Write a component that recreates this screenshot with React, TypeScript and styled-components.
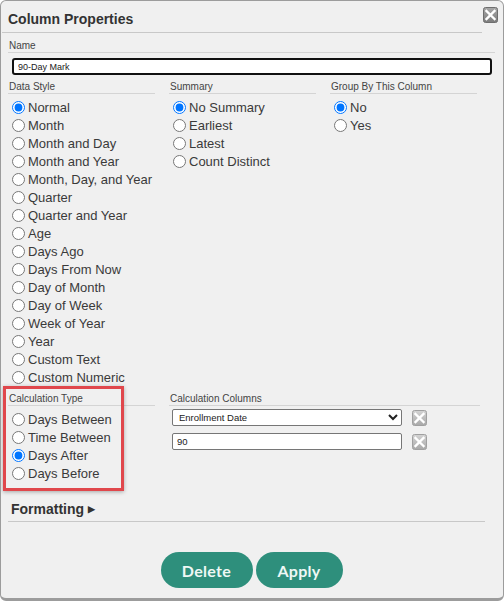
import React from 'react';
import styled, { createGlobalStyle } from 'styled-components';

const GlobalStyle = createGlobalStyle`
  html, body {
    margin: 0;
    padding: 0;
    background: #ffffff;
  }
  * {
    box-sizing: border-box;
  }
`;

const Dialog = styled.div`
  width: 504px;
  height: 601px;
  display: flex;
  flex-direction: column;
  background: #f0f0f0;
  border: 1px solid #9c9c9c;
  border-bottom-width: 3px;
  border-radius: 6px;
  font-family: "Liberation Sans", Arial, sans-serif;
  color: #333;
  overflow: hidden;
`;

const Header = styled.div`
  display: flex;
  align-items: flex-start;
  padding: 6px 5px 0 1px;
`;

const Title = styled.div`
  flex: 1;
  padding: 4px 0 4px 6px;
  border-bottom: 1px solid #c8c8c8;
  font-size: 14px;
  font-weight: bold;
  color: #333;
  line-height: 17px;
`;

const IconButton = styled.button<{ $dark?: boolean }>`
  display: flex;
  padding: 0;
  margin: 0 0 0 ${p => (p.$dark ? '1px' : '5px')};
  border: none;
  background: none;
  cursor: pointer;
`;

const Body = styled.div`
  display: flex;
  flex-direction: column;
  padding: 7px 8px 0 7px;
  flex: 1;
`;

const SectionLabel = styled.div`
  font-size: 10px;
  line-height: 12px;
  color: #444;
  padding-left: 1px;
  border-bottom: 1px solid #d4d4d4;
`;

const NameInput = styled.input`
  margin: 5px 3px 0 4px;
  height: 17px;
  padding: 0 4px;
  border: 2px solid #111;
  border-radius: 3px;
  background: #fff;
  font-family: "Liberation Sans", Arial, sans-serif;
  font-size: 9px;
  color: #222;
  outline: none;
`;

const ColumnsRow = styled.div<{ $top: number }>`
  display: flex;
  gap: 14px;
  margin-top: ${p => p.$top}px;
`;

const Column = styled.div<{ $width?: number }>`
  position: relative;
  display: flex;
  flex-direction: column;
  width: ${p => (p.$width ? `${p.$width}px` : '147px')};
`;

const RadioList = styled.div`
  display: flex;
  flex-direction: column;
  margin-top: 4px;
`;

const RadioLabel = styled.label`
  display: flex;
  align-items: center;
  height: 18px;
  font-size: 13px;
  color: #3a3a3a;
  white-space: nowrap;
  cursor: pointer;

  input {
    width: 13px;
    height: 13px;
    margin: 0 3px 0 4px;
  }
`;

const Highlight = styled.div`
  position: absolute;
  left: -5px;
  top: -7px;
  width: 121px;
  height: 105px;
  border: 3px solid #e0474c;
  box-shadow: 0 1px 4px rgba(0, 0, 0, 0.3);
  pointer-events: none;
`;

const FieldRow = styled.div<{ $top: number }>`
  display: flex;
  align-items: center;
  gap: 5px;
  margin: ${p => p.$top}px 0 0 3px;
`;

const SelectBox = styled.select`
  width: 230px;
  height: 17px;
  padding: 0 2px;
  border: 1px solid #767676;
  border-radius: 2px;
  background: #fff;
  font-family: "Liberation Sans", Arial, sans-serif;
  font-size: 9.5px;
  color: #222;
`;

const TextBox = styled.input`
  width: 230px;
  height: 17px;
  padding: 0 4px;
  border: 1px solid #767676;
  border-radius: 2px;
  background: #fff;
  font-family: "Liberation Sans", Arial, sans-serif;
  font-size: 9.5px;
  color: #222;
`;

const Formatting = styled.div`
  display: flex;
  align-items: center;
  gap: 4px;
  margin: 18px 10px 0 0;
  padding: 0 0 3px 3px;
  border-bottom: 1px solid #c8c8c8;
  font-size: 14px;
  font-weight: bold;
  line-height: 18px;
  color: #333;
`;

const Caret = styled.span`
  font-size: 9px;
  color: #333;
`;

const Footer = styled.div`
  display: flex;
  justify-content: center;
  gap: 3px;
  margin-top: 30px;
`;

const Button = styled.button<{ $width: number }>`
  width: ${p => p.$width}px;
  height: 36px;
  border: none;
  border-radius: 18px;
  background: #2e8f7c;
  color: #eef8f5;
  font-family: Lato, "Open Sans", sans-serif;
  font-size: 16px;
  font-weight: 700;
  letter-spacing: 0.3px;
  cursor: pointer;
`;

const CloseIcon = ({ dark }: { dark?: boolean }) => (
  <svg width={15} height={16} viewBox="0 0 15 16">
    <defs>
      <linearGradient id={dark ? 'gd' : 'gl'} x1="0" y1="0" x2="0" y2="1">
        <stop offset="0" stopColor={dark ? '#a8a8a8' : '#d4d4d4'} />
        <stop offset="1" stopColor={dark ? '#7c7c7c' : '#a8a8a8'} />
      </linearGradient>
    </defs>
    <rect x="0.5" y="0.5" width="14" height="15" rx="2" fill={`url(#${dark ? 'gd' : 'gl'})`} stroke={dark ? '#6e6e6e' : '#a0a0a0'} />
    <path d="M3.5 4 L11.5 12 M11.5 4 L3.5 12" stroke="#fff" strokeWidth="2.4" strokeLinecap="square" />
  </svg>
);

const dataStyles = [
  'Normal',
  'Month',
  'Month and Day',
  'Month and Year',
  'Month, Day, and Year',
  'Quarter',
  'Quarter and Year',
  'Age',
  'Days Ago',
  'Days From Now',
  'Day of Month',
  'Day of Week',
  'Week of Year',
  'Year',
  'Custom Text',
  'Custom Numeric',
];

const summaries = ['No Summary', 'Earliest', 'Latest', 'Count Distinct'];
const groupings = ['No', 'Yes'];
const calcTypes = ['Days Between', 'Time Between', 'Days After', 'Days Before'];

type RadioGroupProps = {
  name: string;
  items: string[];
  selected: string;
};

const RadioGroup = ({ name, items, selected }: RadioGroupProps) => (
  <RadioList>
    {items.map(item => (
      <RadioLabel key={item}>
        <input type="radio" name={name} defaultChecked={item === selected} />
        {item}
      </RadioLabel>
    ))}
  </RadioList>
);

const App = () => (
  <>
    <GlobalStyle />
    <Dialog>
      <Header>
        <Title>Column Properties</Title>
        <IconButton $dark>
          <CloseIcon dark />
        </IconButton>
      </Header>
      <Body>
        <SectionLabel>Name</SectionLabel>
        <NameInput defaultValue="90-Day Mark" />

        <ColumnsRow $top={6}>
          <Column>
            <SectionLabel>Data Style</SectionLabel>
            <RadioGroup name="dataStyle" items={dataStyles} selected="Normal" />
          </Column>
          <Column>
            <SectionLabel>Summary</SectionLabel>
            <RadioGroup name="summary" items={summaries} selected="No Summary" />
          </Column>
          <Column>
            <SectionLabel>Group By This Column</SectionLabel>
            <RadioGroup name="group" items={groupings} selected="No" />
          </Column>
        </ColumnsRow>

        <ColumnsRow $top={7}>
          <Column>
            <SectionLabel>Calculation Type</SectionLabel>
            <RadioGroup name="calcType" items={calcTypes} selected="Days After" />
            <Highlight />
          </Column>
          <Column $width={311}>
            <SectionLabel>Calculation Columns</SectionLabel>
            <FieldRow $top={3}>
              <SelectBox defaultValue="Enrollment Date">
                <option>Enrollment Date</option>
              </SelectBox>
              <IconButton>
                <CloseIcon />
              </IconButton>
            </FieldRow>
            <FieldRow $top={7}>
              <TextBox defaultValue="90" />
              <IconButton>
                <CloseIcon />
              </IconButton>
            </FieldRow>
          </Column>
        </ColumnsRow>

        <Formatting>
          Formatting <Caret>▶</Caret>
        </Formatting>

        <Footer>
          <Button $width={92}>Delete</Button>
          <Button $width={87}>Apply</Button>
        </Footer>
      </Body>
    </Dialog>
  </>
);

export default App;
